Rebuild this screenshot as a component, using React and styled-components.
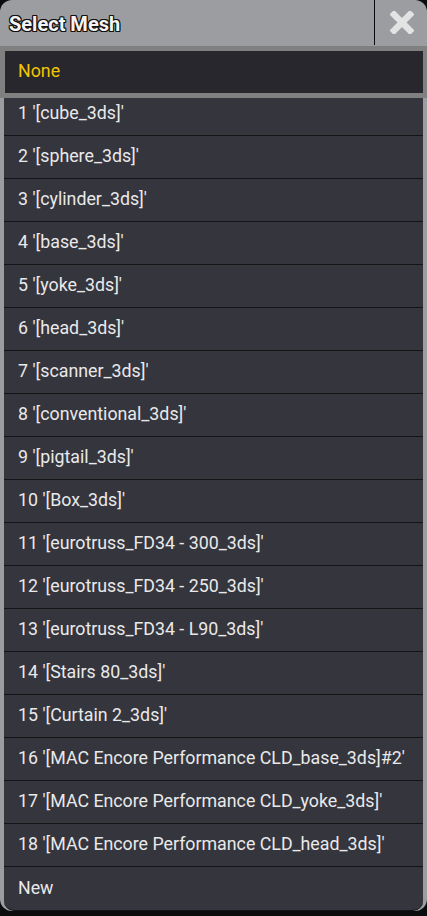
import React from 'react';
import styled, { createGlobalStyle } from "styled-components";

const GlobalStyle = createGlobalStyle`
    html, body {
        margin: 0;
        padding: 0;
        background: #0c0c0e;
    }
    body {
        font-family: Roboto, "Liberation Sans", sans-serif;
    }
`

const Panel = styled.div`
    width: 427px;
    height: 911px;
    display: flex;
    flex-direction: column;
    background: #9c9da1;
    border-radius: 12px;
    box-sizing: border-box;
    padding-bottom: 4px;
    overflow: hidden;
`

const Header = styled.div`
    height: 46px;
    flex-shrink: 0;
    display: flex;
    align-items: stretch;
`

const Title = styled.div`
    flex: 1;
    display: flex;
    align-items: center;
    padding-left: 9px;
    padding-top: 2px;
    font-family: Roboto, "Liberation Sans", sans-serif;
    font-weight: 700;
    font-size: 20px;
    color: #f4f4f4;
    text-shadow:
        -1px -1px 0 #111, 1px -1px 0 #111, -1px 1px 0 #111, 1px 1px 0 #111,
        0 -1px 0 #111, 0 1px 0 #111, -1px 0 0 #111, 1px 0 0 #111;
`

const CloseButton = styled.div`
    width: 51px;
    height: 45px;
    border-left: 1px solid #0a0a0a;
    display: flex;
    align-items: center;
    justify-content: center;
    padding-left: 1px;
`

const List = styled.div`
    flex: 1;
    margin: 5px 4px 0;
    background: #35353d;
    border-bottom: 1px solid #141416;
    border-radius: 0 0 10px 10px;
    display: flex;
    flex-direction: column;
`

const Row = styled.div`
    position: relative;
    height: 43px;
    flex-shrink: 0;
    display: flex;
    align-items: center;
    padding-left: 14px;
    padding-bottom: 3px;
    box-sizing: border-box;
    border-bottom: 1px solid #141416;
    font-size: 17.8px;
    color: ${p => (p.selected ? "#f2c600" : "#e9e9ea")};
    background: ${p => (p.selected ? "#28272d" : "transparent")};
    border-top-left-radius: ${p => (p.selected ? "4px" : "0")};
    z-index: ${p => (p.selected ? 1 : 0)};

    ${p => p.selected && `
        height: 42px;
        border-bottom: none;
        &::after {
            content: "";
            position: absolute;
            top: -5px;
            left: -4px;
            right: -4px;
            bottom: -5px;
            border: 5px solid #7f807f;
            border-right-width: 4px;
        }
    `}

    &:last-child {
        border-bottom: none;
    }
`

const meshes = [
    "1 '[cube_3ds]'",
    "2 '[sphere_3ds]'",
    "3 '[cylinder_3ds]'",
    "4 '[base_3ds]'",
    "5 '[yoke_3ds]'",
    "6 '[head_3ds]'",
    "7 '[scanner_3ds]'",
    "8 '[conventional_3ds]'",
    "9 '[pigtail_3ds]'",
    "10 '[Box_3ds]'",
    "11 '[eurotruss_FD34 - 300_3ds]'",
    "12 '[eurotruss_FD34 - 250_3ds]'",
    "13 '[eurotruss_FD34 - L90_3ds]'",
    "14 '[Stairs 80_3ds]'",
    "15 '[Curtain 2_3ds]'",
    "16 '[MAC Encore Performance CLD_base_3ds]#2'",
    "17 '[MAC Encore Performance CLD_yoke_3ds]'",
    "18 '[MAC Encore Performance CLD_head_3ds]'",
    "New",
]

function CloseIcon() {
    return (
        <svg width="24" height="23" viewBox="0 0 24 23">
            <path d="M4 3.5 L20 19.5 M20 3.5 L4 19.5" stroke="#e3e3e3" strokeWidth="6.5" strokeLinecap="square" />
        </svg>
    )
}

export default function App() {
    return (
        <>
            <GlobalStyle />
            <Panel>
                <Header>
                    <Title>Select Mesh</Title>
                    <CloseButton>
                        <CloseIcon />
                    </CloseButton>
                </Header>
                <List>
                    <Row selected>None</Row>
                    {meshes.map(name => (
                        <Row key={name}>{name}</Row>
                    ))}
                </List>
            </Panel>
        </>
    )
}
